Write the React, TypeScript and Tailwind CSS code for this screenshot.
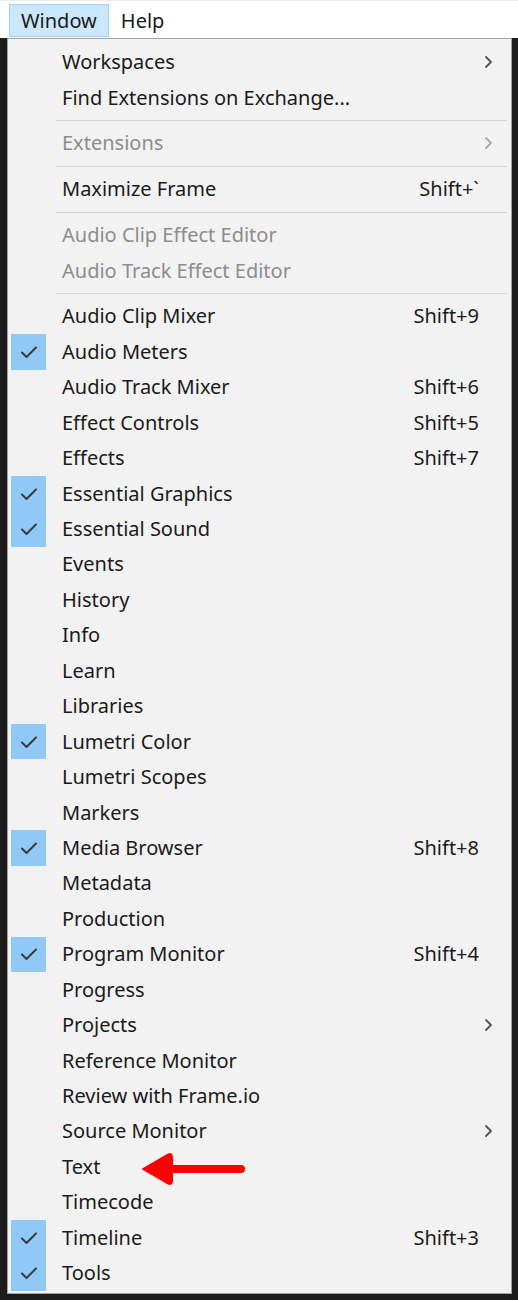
import React from "react";

type Item =
  | { sep: true }
  | {
      sep?: false;
      label: string;
      shortcut?: string;
      checked?: boolean;
      disabled?: boolean;
      submenu?: boolean;
      arrow?: boolean;
    };

const items: Item[] = [
  { label: "Workspaces", submenu: true },
  { label: "Find Extensions on Exchange..." },
  { sep: true },
  { label: "Extensions", disabled: true, submenu: true },
  { sep: true },
  { label: "Maximize Frame", shortcut: "Shift+`" },
  { sep: true },
  { label: "Audio Clip Effect Editor", disabled: true },
  { label: "Audio Track Effect Editor", disabled: true },
  { sep: true },
  { label: "Audio Clip Mixer", shortcut: "Shift+9" },
  { label: "Audio Meters", checked: true },
  { label: "Audio Track Mixer", shortcut: "Shift+6" },
  { label: "Effect Controls", shortcut: "Shift+5" },
  { label: "Effects", shortcut: "Shift+7" },
  { label: "Essential Graphics", checked: true },
  { label: "Essential Sound", checked: true },
  { label: "Events" },
  { label: "History" },
  { label: "Info" },
  { label: "Learn" },
  { label: "Libraries" },
  { label: "Lumetri Color", checked: true },
  { label: "Lumetri Scopes" },
  { label: "Markers" },
  { label: "Media Browser", checked: true, shortcut: "Shift+8" },
  { label: "Metadata" },
  { label: "Production" },
  { label: "Program Monitor", checked: true, shortcut: "Shift+4" },
  { label: "Progress" },
  { label: "Projects", submenu: true },
  { label: "Reference Monitor" },
  { label: "Review with Frame.io" },
  { label: "Source Monitor", submenu: true },
  { label: "Text", arrow: true },
  { label: "Timecode" },
  { label: "Timeline", checked: true, shortcut: "Shift+3" },
  { label: "Tools", checked: true },
];

function Check() {
  return (
    <svg width="18" height="14" viewBox="0 0 18 14" fill="none">
      <polyline points="2,7.5 6.5,12 16,2.5" stroke="#3a3a3a" strokeWidth="2" strokeLinecap="round" strokeLinejoin="round" />
    </svg>
  );
}

function Chevron({ faded }: { faded?: boolean }) {
  return (
    <svg width="9" height="14" viewBox="0 0 9 14" fill="none">
      <polyline points="2,2 7,7 2,12" stroke={faded ? "#a8a8a8" : "#555555"} strokeWidth="1.8" strokeLinecap="round" strokeLinejoin="round" />
    </svg>
  );
}

// red annotation arrow pointing at the "Text" entry
function RedArrow() {
  return (
    <svg className="absolute left-[128px] top-[1px]" width="108" height="36" viewBox="0 0 108 36" fill="none">
      <line x1="32" y1="19" x2="102" y2="19" stroke="#ff0000" strokeWidth="8" strokeLinecap="round" />
      <path d="M4 20 Q2 19 4 18 L28 4 Q34 1 34 8 L34 30 Q34 37 28 34 Z" fill="#ff0000" />
    </svg>
  );
}

export default function App() {
  return (
    <div className="w-[518px] h-[1300px] bg-[#1c1c1c] overflow-hidden" style={{ fontFamily: '"Noto Sans", "Open Sans", sans-serif' }}>
      {/* menu bar */}
      <div className="h-[38px] bg-white border-t border-[#ececec] flex items-end pl-[9px] gap-[3px] text-[20px] text-[#1a1a1a]">
        <div className="h-[33px] mb-[1px] px-[11px] flex items-center bg-[#cce8ff] border border-[#99d1ff]">Window</div>
        <div className="h-[33px] mb-[1px] px-[9px] flex items-center">Help</div>
      </div>

      {/* dropdown */}
      <div className="ml-[7px] w-[505px] bg-[#f2f2f2] border border-[#a0a0a0] pt-[5.5px] pb-[2px] px-[3px] text-[20px] text-[#1a1a1a]">
        {items.map((it, i) =>
          it.sep ? (
            <div key={i} className="h-[10.4px] flex items-center pl-[45px] pr-[1px]">
              <div className="h-px w-full bg-[#d4d4d4]" />
            </div>
          ) : (
            <div key={i} className="relative h-[35.45px] flex items-center">
              <div className={`w-[35px] h-full flex items-center justify-center ${it.checked ? "bg-[#90c8f6]" : ""}`}>
                {it.checked && <Check />}
              </div>
              <div className={`ml-[16px] flex-1 leading-none ${it.disabled ? "text-[#8d8d8d]" : ""}`}>{it.label}</div>
              {it.shortcut && <div className="leading-none mr-[5px]">{it.shortcut}</div>}
              <div className="w-[24px] flex items-center justify-start">{it.submenu && <Chevron faded={it.disabled} />}</div>
              {it.arrow && <RedArrow />}
            </div>
          )
        )}
      </div>
    </div>
  );
}
